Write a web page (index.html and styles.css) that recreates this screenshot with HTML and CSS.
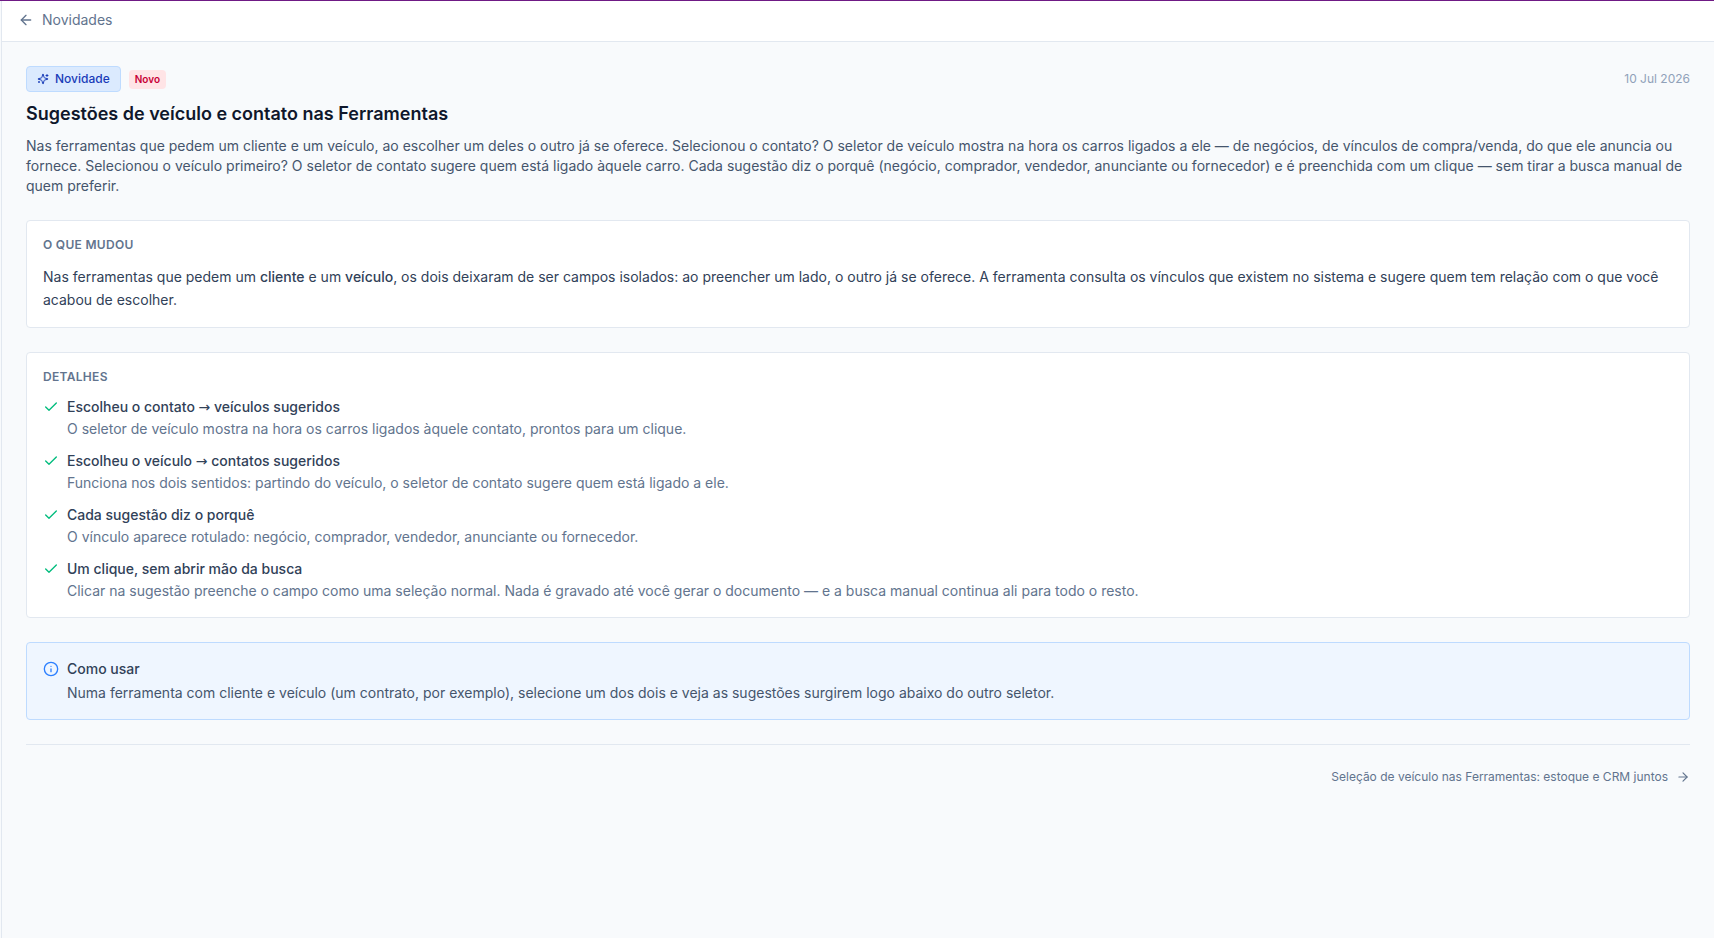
FILE: index.html
```html
<!DOCTYPE html>
<html lang="pt-BR">

<head>
    <meta charset="UTF-8">
    <meta name="viewport" content="width=device-width, initial-scale=1.0">
    <title>Novidades</title>
    <link rel="stylesheet" href="styles.css">
</head>

<body>
    <div class="layout">
        <div class="sidebar-edge"></div>
        <div class="page">
            <header class="topbar">
                <a class="back" href="#">
                    <svg class="icon-16" viewBox="0 0 24 24"><path d="m12 19-7-7 7-7"/><path d="M19 12H5"/></svg>
                    Novidades
                </a>
            </header>
            <main class="content">
                <article class="intro">
                    <div class="meta">
                        <span class="tag">
                            <svg class="icon-12" viewBox="0 0 24 24">
                                <path d="M9.937 15.5A2 2 0 0 0 8.5 14.063l-6.135-1.582a.5.5 0 0 1 0-.962L8.5 9.936A2 2 0 0 0 9.937 8.5l1.582-6.135a.5.5 0 0 1 .963 0L14.063 8.5A2 2 0 0 0 15.5 9.937l6.135 1.581a.5.5 0 0 1 0 .964L15.5 14.063a2 2 0 0 0-1.437 1.437l-1.582 6.135a.5.5 0 0 1-.963 0z"/>
                                <path d="M20 3v4"/>
                                <path d="M22 5h-4"/>
                                <path d="M4 17v2"/>
                                <path d="M5 18H3"/>
                            </svg>
                            Novidade
                        </span>
                        <span class="badge">Novo</span>
                        <time class="date" datetime="2026-07-10">10 Jul 2026</time>
                    </div>
                    <h1>Sugestões de veículo e contato nas Ferramentas</h1>
                    <p class="summary">Nas ferramentas que pedem um cliente e um veículo, ao escolher um deles o outro já se oferece. Selecionou o contato? O seletor de veículo mostra na hora os carros ligados a ele — de negócios, de vínculos de compra/venda, do que ele anuncia ou fornece. Selecionou o veículo primeiro? O seletor de contato sugere quem está ligado àquele carro. Cada sugestão diz o porquê (negócio, comprador, vendedor, anunciante ou fornecedor) e é preenchida com um clique — sem tirar a busca manual de quem preferir.</p>
                </article>

                <section class="card">
                    <h2>O que mudou</h2>
                    <p class="text">Nas ferramentas que pedem um <strong>cliente</strong> e um <strong>veículo</strong>, os dois deixaram de ser campos isolados: ao preencher um lado, o outro já se oferece. A ferramenta consulta os vínculos que existem no sistema e sugere quem tem relação com o que você acabou de escolher.</p>
                </section>

                <section class="card">
                    <h2>Detalhes</h2>
                    <ul class="details">
                        <li>
                            <svg class="icon-16 check" viewBox="0 0 24 24"><path d="M20 6 9 17l-5-5"/></svg>
                            <div>
                                <h3>Escolheu o contato <span class="arrow">→</span> veículos sugeridos</h3>
                                <p>O seletor de veículo mostra na hora os carros ligados àquele contato, prontos para um clique.</p>
                            </div>
                        </li>
                        <li>
                            <svg class="icon-16 check" viewBox="0 0 24 24"><path d="M20 6 9 17l-5-5"/></svg>
                            <div>
                                <h3>Escolheu o veículo <span class="arrow">→</span> contatos sugeridos</h3>
                                <p>Funciona nos dois sentidos: partindo do veículo, o seletor de contato sugere quem está ligado a ele.</p>
                            </div>
                        </li>
                        <li>
                            <svg class="icon-16 check" viewBox="0 0 24 24"><path d="M20 6 9 17l-5-5"/></svg>
                            <div>
                                <h3>Cada sugestão diz o porquê</h3>
                                <p>O vínculo aparece rotulado: negócio, comprador, vendedor, anunciante ou fornecedor.</p>
                            </div>
                        </li>
                        <li>
                            <svg class="icon-16 check" viewBox="0 0 24 24"><path d="M20 6 9 17l-5-5"/></svg>
                            <div>
                                <h3>Um clique, sem abrir mão da busca</h3>
                                <p>Clicar na sugestão preenche o campo como uma seleção normal. Nada é gravado até você gerar o documento — e a busca manual continua ali para todo o resto.</p>
                            </div>
                        </li>
                    </ul>
                </section>

                <section class="card card-info">
                    <svg class="icon-16 info" viewBox="0 0 24 24"><circle cx="12" cy="12" r="10"/><path d="M12 16v-4"/><path d="M12 8h.01"/></svg>
                    <div>
                        <h3>Como usar</h3>
                        <p>Numa ferramenta com cliente e veículo (um contrato, por exemplo), selecione um dos dois e veja as sugestões surgirem logo abaixo do outro seletor.</p>
                    </div>
                </section>

                <nav class="pager">
                    <a href="#">
                        Seleção de veículo nas Ferramentas: estoque e CRM juntos
                        <svg class="icon-14" viewBox="0 0 24 24"><path d="M5 12h14"/><path d="m12 5 7 7-7 7"/></svg>
                    </a>
                </nav>
            </main>
        </div>
    </div>
</body>

</html>
```
FILE: styles.css
```css
* {
    margin: 0;
    padding: 0;
    box-sizing: border-box;
}

body {
    font-family: Inter, "Liberation Sans", sans-serif;
    font-size: 14px;
    line-height: 20px;
    color: #314158;
    background: #f8fafc;
}

a {
    color: #62748e;
    text-decoration: none;
}

svg {
    flex-shrink: 0;
    fill: none;
    stroke: currentColor;
    stroke-width: 2;
    stroke-linecap: round;
    stroke-linejoin: round;
}

.icon-12 {
    width: 12px;
    height: 12px;
}

.icon-14 {
    width: 14px;
    height: 14px;
}

.icon-16 {
    width: 16px;
    height: 16px;
}

.layout {
    display: flex;
    min-height: 100vh;
    border-top: 1px solid #6f1a85;
}

.sidebar-edge {
    width: 2px;
    border-right: 1px solid #e2e8f0;
}

.page {
    flex: 1;
    min-width: 0;
}

.topbar {
    display: flex;
    padding: 9px 16px 11px;
    background: #fff;
    border-bottom: 1px solid #e2e8f0;
}

.back {
    display: flex;
    align-items: center;
    gap: 8px;
}

.content {
    display: flex;
    flex-direction: column;
    gap: 24px;
    padding: 24px;
}

.meta {
    display: flex;
    align-items: center;
    gap: 8px;
    margin-bottom: 8px;
    font-size: 12px;
    line-height: 16px;
}

.tag {
    display: flex;
    align-items: center;
    gap: 6px;
    padding: 4px 10px;
    font-weight: 500;
    color: #193cb8;
    background: #dbeafe;
    border: 1px solid #bedbff;
    border-radius: 4px;
}

.badge {
    padding: 2px 6px;
    font-size: 10px;
    line-height: 15px;
    font-weight: 600;
    color: #c70036;
    background: #ffe4e6;
    border-radius: 4px;
}

.date {
    margin-left: auto;
    color: #90a1b9;
}

h1 {
    margin-bottom: 8px;
    font-size: 18px;
    line-height: 28px;
    font-weight: 600;
    color: #0f172b;
}

.summary {
    color: #45556c;
}

.card {
    padding: 16px;
    background: #fff;
    border: 1px solid #e2e8f0;
    border-radius: 4px;
}

h2 {
    margin-bottom: 12px;
    font-size: 12px;
    line-height: 16px;
    font-weight: 600;
    letter-spacing: 0.3px;
    text-transform: uppercase;
    color: #62748e;
}

h3 {
    font-size: 14px;
    font-weight: 500;
}

.text {
    line-height: 23px;
}

.text strong {
    font-weight: 500;
}

.details {
    display: flex;
    flex-direction: column;
    gap: 12px;
    list-style: none;
}

.details li,
.card-info {
    display: flex;
    gap: 8px;
}

.details p {
    margin-top: 2px;
    color: #62748e;
}

.arrow {
    font-family: "DejaVu Sans", sans-serif;
    line-height: 1;
}

.check {
    margin-top: 2px;
    color: #00bc7d;
}

.card-info {
    background: #eff6ff;
    border-color: #bedbff;
}

.card-info p {
    margin-top: 4px;
    color: #45556c;
}

.info {
    margin-top: 2px;
    color: #2b7fff;
}

.pager {
    display: flex;
    justify-content: flex-end;
    padding-top: 24px;
    border-top: 1px solid #e2e8f0;
    font-size: 12px;
    line-height: 16px;
}

.pager a {
    display: flex;
    align-items: center;
    gap: 8px;
}
```
